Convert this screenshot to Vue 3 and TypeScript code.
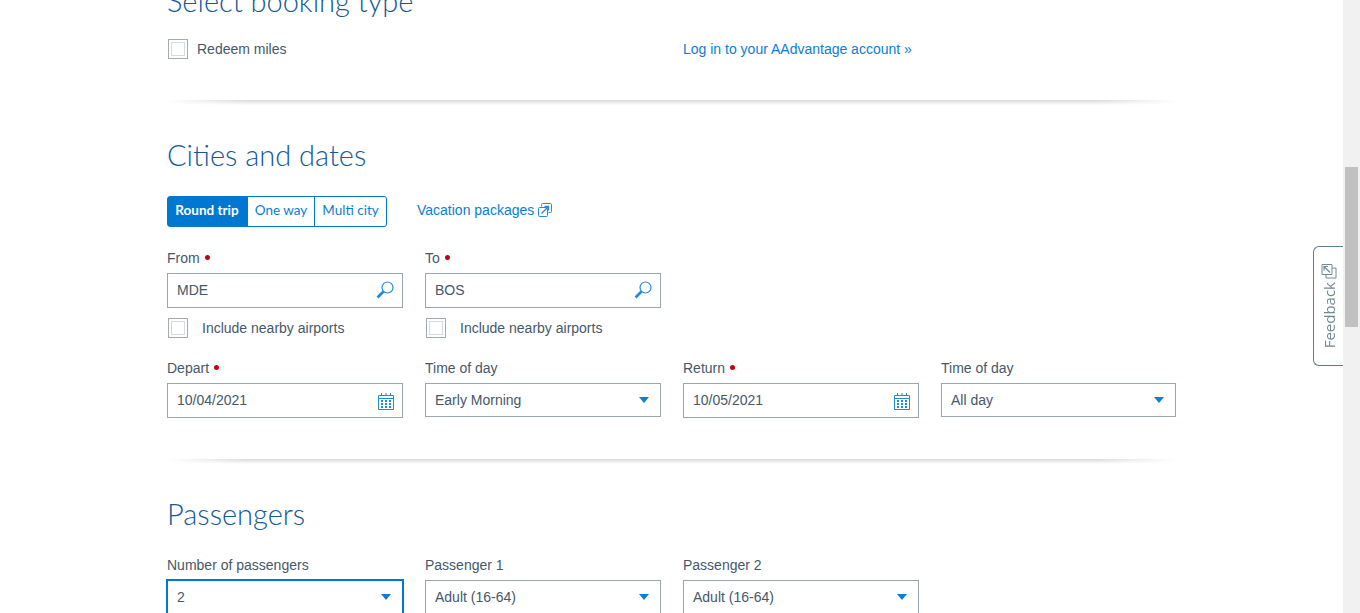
<script setup lang="ts">
const tripTypes = ["Round trip", "One way", "Multi city"];
const passengers = ["Passenger 1", "Passenger 2"];
</script>

<template>
  <div class="page">
    <main class="content">
      <h2 class="heading first">Select booking type</h2>
      <div class="booking-row">
        <label class="check redeem"><span class="box"></span>Redeem miles</label>
        <a class="link">Log in to your AAdvantage account »</a>
      </div>
      <div class="divider"></div>

      <h2 class="heading">Cities and dates</h2>
      <div class="trip-row">
        <div class="segments">
          <span v-for="(t, i) in tripTypes" :key="t" class="segment" :class="{ active: i === 0 }">{{ t }}</span>
        </div>
        <a class="link vacation">
          Vacation packages
          <svg width="14" height="14" viewBox="0 0 14 14" fill="none" stroke="#1f8ae0" stroke-width="1">
            <path d="M3.500 3.500V1.500a1 1 0 0 1 1-1h8a1 1 0 0 1 1 1v7a1 1 0 0 1-1 1H10.500" />
            <path d="M1.500 4.500h7a1 1 0 0 1 1 1v7a1 1 0 0 1-1 1h-7a1 1 0 0 1-1-1v-7a1 1 0 0 1 1-1z" />
            <path d="M3.500 10.500 10.500 3.500M6.500 3.500h4v4" stroke-width="1.300" />
          </svg>
        </a>
      </div>

      <div class="grid airports">
        <div class="field">
          <span class="label">From <i class="req"></i></span>
          <div class="control input">
            MDE
            <svg class="icon search" width="20" height="20" viewBox="0 0 20 20" fill="none" stroke="#1f8ae0">
              <circle cx="12.500" cy="7.500" r="5.500" stroke-width="1.200" />
              <path d="M8.500 11.500 2.500 17.500" stroke-width="2.600" />
            </svg>
          </div>
          <label class="check nearby"><span class="box"></span>Include nearby airports</label>
        </div>
        <div class="field">
          <span class="label">To <i class="req"></i></span>
          <div class="control input">
            BOS
            <svg class="icon search" width="20" height="20" viewBox="0 0 20 20" fill="none" stroke="#1f8ae0">
              <circle cx="12.500" cy="7.500" r="5.500" stroke-width="1.200" />
              <path d="M8.500 11.500 2.500 17.500" stroke-width="2.600" />
            </svg>
          </div>
          <label class="check nearby"><span class="box"></span>Include nearby airports</label>
        </div>
      </div>

      <div class="grid dates">
        <div class="field">
          <span class="label">Depart <i class="req"></i></span>
          <div class="control input">
            10/04/2021
            <svg class="icon cal" width="16" height="18" viewBox="0 0 16 18" fill="none" stroke="#1f8ae0">
              <path d="M.500 3.500h15v14H.500zM.500 6.500h15" />
              <path d="M3.500 1v3M8 1v3M12.500 1v3" />
              <path d="M3 9h2M7 9h2M11 9h2M3 12h2M7 12h2M11 12h2M3 15h2M7 15h2M11 15h2" stroke-width="2" />
            </svg>
          </div>
        </div>
        <div class="field">
          <span class="label">Time of day</span>
          <div class="control select">Early Morning<span class="caret"></span></div>
        </div>
        <div class="field">
          <span class="label">Return <i class="req"></i></span>
          <div class="control input">
            10/05/2021
            <svg class="icon cal" width="16" height="18" viewBox="0 0 16 18" fill="none" stroke="#1f8ae0">
              <path d="M.500 3.500h15v14H.500zM.500 6.500h15" />
              <path d="M3.500 1v3M8 1v3M12.500 1v3" />
              <path d="M3 9h2M7 9h2M11 9h2M3 12h2M7 12h2M11 12h2M3 15h2M7 15h2M11 15h2" stroke-width="2" />
            </svg>
          </div>
        </div>
        <div class="field">
          <span class="label">Time of day</span>
          <div class="control select">All day<span class="caret"></span></div>
        </div>
      </div>
      <div class="divider second"></div>

      <h2 class="heading">Passengers</h2>
      <div class="grid pax">
        <div class="field">
          <span class="label">Number of passengers</span>
          <div class="control select focused">2<span class="caret"></span></div>
        </div>
        <div v-for="p in passengers" :key="p" class="field">
          <span class="label">{{ p }}</span>
          <div class="control select">Adult (16-64)<span class="caret"></span></div>
        </div>
      </div>
    </main>

    <div class="feedback">
      <span>Feedback</span>
      <svg width="16" height="16" viewBox="0 0 16 16" fill="none" stroke="#6f8a98">
        <path d="M1 1.500h10v10H1z" />
        <path d="M11 5h4v10H5v-3.500" />
        <path d="M9 9.500 3 3.500M3 7.500v-4h4" stroke-width="1.200" />
      </svg>
    </div>

    <div class="scrollbar"><div class="thumb"></div></div>
  </div>
</template>

<style>
html,
body {
  margin: 0;
  overflow: hidden;
  background: #fff;
}
</style>

<style scoped>
.page {
  position: relative;
  height: 613px;
  overflow: hidden;
  background: #fff;
  font-family: "Liberation Sans", Arial, sans-serif;
  font-size: 14px;
  color: #46586a;
}

.content {
  width: 1010px;
  margin: -17px 0 0 167px;
}

.heading {
  margin: 0;
  font-family: Lato, sans-serif;
  font-size: 29px;
  font-weight: 300;
  line-height: 36px;
  color: #14599a;
}

.first {
  margin-bottom: 20px;
}

.booking-row {
  display: grid;
  grid-template-columns: 516px 1fr;
  align-items: center;
  height: 20px;
}

.link {
  color: #0a7ed6;
}

.check {
  display: flex;
  align-items: center;
  line-height: 20px;
}

.box {
  box-sizing: border-box;
  width: 20px;
  height: 20px;
  margin-left: 1px;
  border: 1px solid #a3abb0;
  background: #fff;
  box-shadow: inset 0 0 0 2px #fff, inset 0 0 0 3px #d5dbdf;
}

.redeem .box {
  margin-right: 9px;
}

.nearby .box {
  margin-right: 14px;
}

.divider {
  height: 5px;
  margin-top: 41px;
  margin-bottom: 32px;
  background: linear-gradient(to bottom, rgba(0, 0, 0, 0.15), rgba(0, 0, 0, 0));
  mask-image: linear-gradient(to right, transparent, #000 8%, #000 92%, transparent);
}

.trip-row {
  display: flex;
  align-items: center;
  margin-top: 23px;
}

.segments {
  display: flex;
  box-sizing: border-box;
  height: 31px;
  border: 1px solid #0078d2;
  border-radius: 3px;
  font-family: Lato, sans-serif;
  font-size: 13.5px;
  color: #0a7ed6;
}

.segment {
  display: flex;
  align-items: center;
  justify-content: center;
  box-sizing: border-box;
  width: 67px;
  padding-bottom: 4px;
  border-left: 1px solid #0078d2;
}

.segment:first-child {
  width: 79px;
  padding-right: 1px;
  border-left: 0;
}

.segment:last-child {
  width: 72px;
}

.segment.active {
  background: #0078d2;
  color: #fff;
  font-weight: 700;
}

.vacation {
  display: flex;
  align-items: center;
  gap: 4px;
  margin-left: 30px;
  padding-bottom: 3px;
}

.grid {
  display: grid;
  grid-template-columns: 236px 236px 236px 235px;
  column-gap: 22px;
}

.airports {
  margin-top: 23px;
}

.dates {
  margin-top: 22px;
}

.pax {
  margin-top: 25px;
}

.field {
  display: flex;
  flex-direction: column;
}

.label {
  display: flex;
  align-items: center;
  gap: 5px;
  height: 16px;
  margin-bottom: 7px;
  line-height: 16px;
}

.req {
  width: 5px;
  height: 5px;
  margin-bottom: 2px;
  border-radius: 50%;
  background: #c30019;
}

.control {
  display: flex;
  align-items: center;
  justify-content: space-between;
  box-sizing: border-box;
  padding: 0 9px;
  border: 1px solid #9da6ab;
  background: #fff;
}

.input {
  height: 35px;
  padding-bottom: 1px;
}

.select {
  height: 34px;
  padding-right: 9px;
}

.select.focused {
  border: 2px solid #0078d2;
  height: 40px;
  margin: -1px -1px 0;
  padding-left: 9px;
  padding-right: 9px;
  padding-bottom: 5px;
}

.icon {
  flex-shrink: 0;
}

.search {
  margin-right: -2px;
}

.cal {
  margin-right: -1px;
  margin-top: 2px;
}

.caret {
  width: 0;
  height: 0;
  margin-right: 2px;
  border-left: 5px solid transparent;
  border-right: 5px solid transparent;
  border-top: 6px solid #0a7ed6;
}

.nearby {
  margin-top: 10px;
}

.feedback {
  position: absolute;
  left: 1313px;
  top: 246px;
  display: flex;
  flex-direction: column-reverse;
  align-items: center;
  justify-content: center;
  gap: 3px;
  box-sizing: border-box;
  width: 30px;
  height: 120px;
  border: 1px solid #5f7d8c;
  border-right: 0;
  border-radius: 6px 0 0 6px;
  background: #fff;
  color: #6f8a98;
  font-family: "Open Sans", sans-serif;
  font-size: 15px;
}

.feedback span {
  writing-mode: vertical-rl;
  transform: rotate(180deg);
}

.scrollbar {
  position: absolute;
  top: 0;
  right: 0;
  width: 17px;
  height: 613px;
  background: #f1f1f1;
}

.thumb {
  width: 13px;
  height: 160px;
  margin: 167px 0 0 2px;
  background: #c1c1c1;
}
</style>
